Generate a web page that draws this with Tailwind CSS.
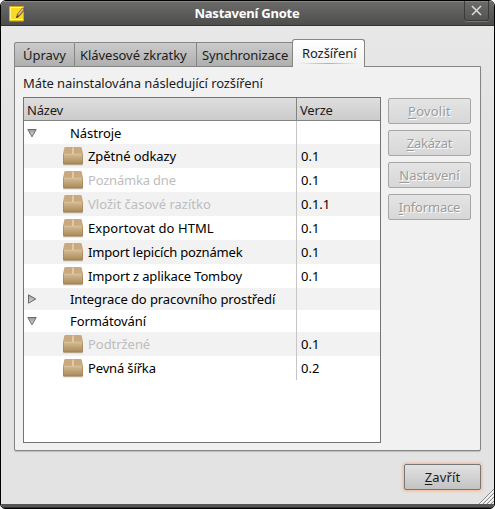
<!DOCTYPE html>
<html lang="cs">
<head>
<meta charset="utf-8">
<title>Nastavení Gnote</title>
<script src="https://cdn.jsdelivr.net/npm/@tailwindcss/browser@4"></script>
</head>
<body class="bg-white overflow-hidden">
<svg width="0" height="0" class="absolute">
  <defs>
    <linearGradient id="pk" x1="0" y1="0" x2="0" y2="1"><stop offset="0" stop-color="#d6bd94"/><stop offset="1" stop-color="#a58658"/></linearGradient>
    <linearGradient id="ar" x1="0" y1="0" x2="0" y2="1"><stop offset="0" stop-color="#9a9a9a"/><stop offset="1" stop-color="#dcdcdc"/></linearGradient>
    <symbol id="box" viewBox="0 0 22 20">
      <path d="M1 19h20" stroke="#000" stroke-opacity=".15"/>
      <path d="M1 8h20v9.500q0 1-1 1H2q-1 0-1-1z" fill="url(#pk)"/>
      <path d="M3.500 1h15q1 0 1.300 1L21 8H1l1.200-6q.3-1 1.300-1z" fill="#c9aa80"/>
      <path d="M1.500 8.200h19" stroke="#dcc59d" stroke-opacity=".7"/>
      <path d="M1.500 8v9q0 1 1 1h17q1 0 1-1V8" fill="none" stroke="#a08154" stroke-opacity=".6"/>
      <path d="M10.300 1.500h1.400v6.500h-1.400z" fill="#e6d6ba"/>
    </symbol>
    <symbol id="down" viewBox="0 0 10 10"><path d="M.8 1.500h8.400L5 8.800z" fill="url(#ar)" stroke="#6a6a6a"/></symbol>
    <symbol id="right" viewBox="0 0 10 10"><path d="M1.500 .8v8.400L8.800 5z" fill="url(#ar)" stroke="#6a6a6a"/></symbol>
  </defs>
</svg>
<div class="w-[495px] h-[509px] flex flex-col rounded-t-[6px] rounded-b-[5px] overflow-hidden border border-black bg-[#e4e4e4] font-['Noto_Sans','Open_Sans',sans-serif] text-[13px] leading-[16px] tracking-[-0.2px] text-[#1c1c1c]">
  <header class="relative h-[25px] shrink-0 flex items-start justify-center bg-linear-to-b from-[#6b6b69] to-[#4d4d4c] border-t border-t-[#858583] border-b border-b-[#333]">
    <svg class="absolute left-[8px] top-[4px]" width="17" height="17" viewBox="0 0 17 17">
      <path d="M.5 .5h14v14.500H.5z" fill="#f4dc24" stroke="#dca51c"/>
      <path d="M1.500 13.500v-12h12" fill="none" stroke="#fff49a"/>
      <path d="M2 13.500h12" stroke="#fff7b0"/>
      <path d="M7.500 11.500l1-3.500L13.500 2l2 1.500-5 6.500z" fill="#a8713a" stroke="#5b3511" stroke-width=".6"/>
      <path d="M9.500 8.500l4.500-5.500" stroke="#ecc998" stroke-width="1.300"/>
      <path d="M7.200 12l.8-2 1.500 1z" fill="#222"/>
    </svg>
    <h1 class="mt-[3px] -ml-[1px] font-bold text-white whitespace-nowrap tracking-[-0.24px]">Nastavení Gnote</h1>
    <div class="absolute right-[5px] -top-px w-[25px] h-[20px] rounded-b-[3px] border border-t-0 border-[#3b3b3a] shadow-[0_1px_0_#777] flex items-center justify-center">
      <svg width="11" height="11" viewBox="0 0 11 11"><path d="M1 1l9 9M10 1l-9 9" stroke="#dedcd8" stroke-width="1.500"/></svg>
    </div>
  </header>

  <main class="flex-1 flex flex-col px-[13px] pt-[13px] bg-linear-to-b from-[#e8e8e8] to-[#e3e3e3] to-20%">
    <nav class="flex items-end h-[28px] z-10 -mb-px">
      <div class="w-[61px] h-[25px] border border-[#848683] bg-linear-to-b from-[#cbcbcb] to-[#afafaf] pl-[8px] pt-[4px] rounded-tl-[2px] whitespace-nowrap tracking-[-0.05px]">Úpravy</div>
      <div class="w-[122px] h-[25px] border border-l-0 border-[#848683] bg-linear-to-b from-[#cbcbcb] to-[#afafaf] pl-[5px] pt-[4px] whitespace-nowrap tracking-[-0.05px]">Klávesové zkratky</div>
      <div class="w-[95px] h-[25px] border border-x-0 border-[#848683] bg-linear-to-b from-[#cbcbcb] to-[#afafaf] pl-[5px] pt-[4px] whitespace-nowrap tracking-[-0.1px]">Synchronizace</div>
      <div class="w-[73px] h-[28px] border border-b-0 border-[#848683] rounded-t-[3px] bg-linear-to-b from-white to-[#f1f1f1] pl-[9px] pt-[5px] whitespace-nowrap tracking-[-0.1px]">Rozšíření<div class="w-[60px] h-px mt-[2px] -ml-[4px] bg-linear-to-r from-transparent via-[#f19a78] to-transparent"></div></div>
    </nav>
    <section class="h-[385px] border border-[#848683] rounded-b-[2px] shadow-[0_1px_1px_#bcbcbc] bg-[#f1f1f1] px-[8px] pt-[8px]">
      <p class="h-[22px] whitespace-nowrap tracking-[-0.09px]">Máte nainstalována následující rozšíření</p>
      <div class="flex items-start gap-[7px]">
        <div class="w-[358px] h-[346px] border border-[#737573] bg-white text-black">
          <div class="h-[23px] grid grid-cols-[273px_1fr] bg-linear-to-b from-[#dfdfdf] to-[#cbcbcb] border-b border-b-[#828482] text-[#1c1c1c]">
            <div class="pl-[3px] pt-[4px] border-r border-r-[#828482]">Název</div><div class="pl-[3px] pt-[4px]">Verze</div>
          </div>
          <div id="rows"></div>
        </div>
        <div class="w-[83px] pt-px flex flex-col gap-[6px] text-[#9c9c9c] [text-shadow:1px_1px_0_#fff]">
          <div class="h-[26px] border border-[#a6a7a5] rounded-[2px] bg-linear-to-b from-[#e4e4e4] to-[#d7d7d7] text-center pt-[4px] tracking-[0.2px]"><u class="underline-offset-2">P</u>ovolit</div>
          <div class="h-[26px] border border-[#a6a7a5] rounded-[2px] bg-linear-to-b from-[#e4e4e4] to-[#d7d7d7] text-center pt-[4px]"><u class="underline-offset-2">Z</u>akázat</div>
          <div class="h-[26px] border border-[#a6a7a5] rounded-[2px] bg-linear-to-b from-[#e4e4e4] to-[#d7d7d7] text-center pt-[4px] tracking-[-0.05px]"><u class="underline-offset-2">N</u>astavení</div>
          <div class="h-[26px] border border-[#a6a7a5] rounded-[2px] bg-linear-to-b from-[#e4e4e4] to-[#d7d7d7] text-center pt-[4px]"><u class="underline-offset-2">I</u>nformace</div>
        </div>
      </div>
    </section>
    <div class="flex justify-end mt-[13px]">
      <div class="w-[77px] h-[26px] border border-[#777] rounded-[2px] shadow-[0_0_3px_1px_#f4b48c] bg-linear-to-b from-[#e2e2e2] to-[#c3c3c3] text-center pt-[4px] tracking-[0.1px]"><u class="underline-offset-2">Z</u>avřít</div>
    </div>
  </main>
  <footer class="relative h-[4px] shrink-0 bg-[#555] border-b border-b-[#333]">
    <svg class="absolute right-0 bottom-[3px]" width="15" height="15" viewBox="0 0 15 15"><path d="M0 15L15 0M4 15L15 4M8 15l7-7M12 15l3-3" stroke="#8c8c8c"/><path d="M1.500 15L15 1.500M5.500 15L15 5.500M9.500 15L15 9.500" stroke="#fff"/></svg>
  </footer>
</div>
<script>
const data = [
  ['down', 'Nástroje', '', 'h-[23px]', 'tracking-[-0.05px]'],
  ['', 'Zpětné odkazy', '0.1', 'h-[24px]', 'tracking-[-0.07px]'],
  ['', 'Poznámka dne', '0.1', 'h-[24px]', 'tracking-[-0.2px]', 1],
  ['', 'Vložit časové razítko', '0.1.1', 'h-[24px]', 'tracking-[0.02px]', 1],
  ['', 'Exportovat do HTML', '0.1', 'h-[24px]', 'tracking-[0.08px]'],
  ['', 'Import lepicích poznámek', '0.1', 'h-[24px]', 'tracking-[-0.18px]'],
  ['', 'Import z aplikace Tomboy', '0.1', 'h-[24px]', 'tracking-[-0.13px]'],
  ['right', 'Integrace do pracovního prostředí', '', 'h-[22px]', 'tracking-[-0.09px]'],
  ['down', 'Formátování', '', 'h-[22px]', 'tracking-[-0.1px]'],
  ['', 'Podtržené', '0.1', 'h-[24px]', 'tracking-[-0.05px]', 1],
  ['', 'Pevná šířka', '0.2', 'h-[24px]', 'tracking-[-0.15px]']
];
document.getElementById('rows').innerHTML = data.map(([icon, name, ver, h, tr, off], i) => `
  <div class="${h} grid grid-cols-[273px_1fr] ${i % 2 ? 'bg-[#f2f2f2]' : 'bg-white'}">
    <div class="flex items-center border-r border-r-[#c6c6c6] whitespace-nowrap ${icon ? 'pl-[3px] gap-[33px]' : 'pl-[38px] gap-[4px]'}">
      ${icon ? `<svg width="10" height="10"><use href="#${icon}"/></svg>` : '<svg width="22" height="20"><use href="#box"/></svg>'}
      <span class="${tr} ${off ? 'text-[#bdbdbd]' : ''}">${name}</span>
    </div>
    <div class="pl-[4px] flex items-center"><span class="tracking-normal">${ver}</span></div>
  </div>`).join('');
</script>
</body>
</html>
